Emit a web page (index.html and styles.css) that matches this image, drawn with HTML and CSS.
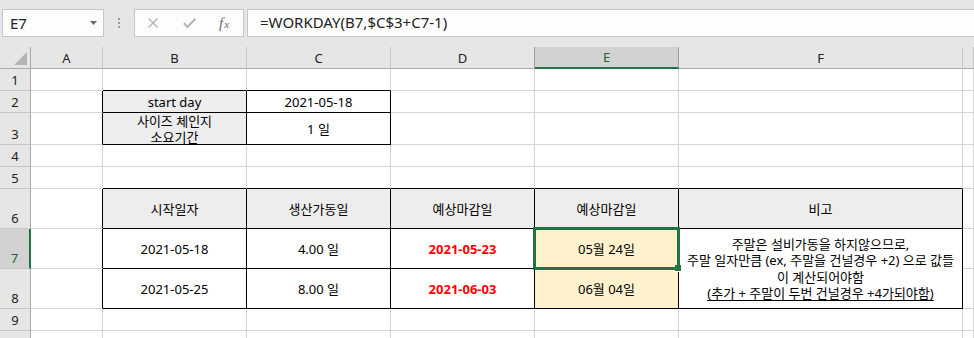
FILE: index.html
```html
<!DOCTYPE html>
<html lang="ko">
<head>
<meta charset="utf-8">
<title>Sheet</title>
<link rel="stylesheet" href="styles.css">
</head>
<body>
<div class="toolbar">
  <div class="namebox">
    <span>E7</span>
    <svg class="dd" width="7" height="4" viewBox="0 0 7 4"><polygon points="0,0 7,0 3.5,4" fill="#6a6a6a"/></svg>
  </div>
  <div class="grip">
    <svg width="2" height="10" viewBox="0 0 2 10"><rect x="0" y="0" width="2" height="2" fill="#9a9a9a"/><rect x="0" y="4" width="2" height="2" fill="#9a9a9a"/><rect x="0" y="8" width="2" height="2" fill="#9a9a9a"/></svg>
  </div>
  <div class="fbtns">
    <svg class="ic-x" width="10" height="10" viewBox="0 0 10 10"><path d="M0.5 0.5 L9.5 9.5 M9.5 0.5 L0.5 9.5" stroke="#b3b3b3" stroke-width="1.4" fill="none"/></svg>
    <svg class="ic-ok" width="13" height="10" viewBox="0 0 13 10"><path d="M0.8 5.2 L4.6 9 L12.3 0.8" stroke="#b3b3b3" stroke-width="2" fill="none"/></svg>
    <span class="fx"><i>f</i><i class="sx">x</i></span>
  </div>
  <div class="finput">=WORKDAY(B7,$C$3+C7-1)</div>
</div>

<div class="sheet">
  <!-- header row -->
  <div class="c corner"><svg width="13" height="13" viewBox="0 0 13 13"><polygon points="13,0 13,13 0,13" fill="#b4b4b4"/></svg></div>
  <div class="c ch">A</div>
  <div class="c ch">B</div>
  <div class="c ch">C</div>
  <div class="c ch chd">D</div>
  <div class="c ch chsel">E</div>
  <div class="c ch">F</div>
  <div class="c ch"></div>

  <!-- row 1 -->
  <div class="c rh">1</div>
  <div class="c"></div>
  <div class="c kb"></div>
  <div class="c kb"></div>
  <div class="c"></div>
  <div class="c"></div>
  <div class="c"></div>
  <div class="c"></div>

  <!-- row 2 -->
  <div class="c rh">2</div>
  <div class="c kr"></div>
  <div class="c kr kb hd">start day</div>
  <div class="c kr kb">2021-05-18</div>
  <div class="c"></div>
  <div class="c"></div>
  <div class="c"></div>
  <div class="c"></div>

  <!-- row 3 -->
  <div class="c rh">3</div>
  <div class="c kr"></div>
  <div class="c kr kb hd"><span class="txt two">사이즈 체인지<br>소요기간</span></div>
  <div class="c kr kb">1 일</div>
  <div class="c"></div>
  <div class="c"></div>
  <div class="c"></div>
  <div class="c"></div>

  <!-- row 4 -->
  <div class="c rh">4</div>
  <div class="c"></div>
  <div class="c"></div>
  <div class="c"></div>
  <div class="c"></div>
  <div class="c"></div>
  <div class="c"></div>
  <div class="c"></div>

  <!-- row 5 -->
  <div class="c rh">5</div>
  <div class="c"></div>
  <div class="c kb"></div>
  <div class="c kb"></div>
  <div class="c kb"></div>
  <div class="c kb"></div>
  <div class="c kb"></div>
  <div class="c"></div>

  <!-- row 6 -->
  <div class="c rh">6</div>
  <div class="c kr"></div>
  <div class="c kr kb hd">시작일자</div>
  <div class="c kr kb hd">생산가동일</div>
  <div class="c kr kb hd">예상마감일</div>
  <div class="c kr kb hd">예상마감일</div>
  <div class="c kr kb hd">비고</div>
  <div class="c"></div>

  <!-- row 7 -->
  <div class="c rh rhsel">7</div>
  <div class="c kr"></div>
  <div class="c kr kb">2021-05-18</div>
  <div class="c kr kb">4.00 일</div>
  <div class="c kr kb red">2021-05-23</div>
  <div class="c kr kb yl sel">05월 24일<span class="selbox"><span class="handle"></span></span></div>
  <div class="c kr kb note"><span class="txt">주말은 설비가동을 하지않으므로,<br>주말 일자만큼 (ex, 주말을 건널경우 +2) 으로 값들<br>이 계산되어야함<br><u>(추가 + 주말이 두번 건널경우 +4가되야함)</u></span></div>
  <div class="c"></div>

  <!-- row 8 -->
  <div class="c rh">8</div>
  <div class="c kr"></div>
  <div class="c kr kb">2021-05-25</div>
  <div class="c kr kb">8.00 일</div>
  <div class="c kr kb red">2021-06-03</div>
  <div class="c kr kb yl">06월 04일</div>
  <div class="c"></div>

  <!-- row 9 -->
  <div class="c rh">9</div>
  <div class="c"></div>
  <div class="c"></div>
  <div class="c"></div>
  <div class="c"></div>
  <div class="c"></div>
  <div class="c"></div>
  <div class="c"></div>

  <!-- row 10 (cut off by the window) -->
  <div class="c rh"></div>
  <div class="c"></div>
  <div class="c"></div>
  <div class="c"></div>
  <div class="c"></div>
  <div class="c"></div>
  <div class="c"></div>
  <div class="c"></div>
</div>
</body>
</html>
```

FILE: styles.css
```css
* { box-sizing: border-box; }
html, body { margin: 0; padding: 0; }
body {
  width: 974px;
  height: 338px;
  overflow: hidden;
  background: #ffffff;
  font-family: "Noto Sans", "Noto Sans CJK KR", sans-serif;
  color: #000;
}

/* ---------- formula bar ---------- */
.toolbar {
  height: 47px;
  background: #e6e6e6;
  display: flex;
  align-items: flex-start;
  padding: 9px 0 0 2px;
}
.namebox {
  width: 102px;
  height: 28px;
  background: #fdfdfd;
  border: 1px solid #c6c6c6;
  display: flex;
  align-items: center;
  justify-content: space-between;
  padding: 0 6px 0 7px;
  font-size: 15px;
  color: #222;
}
.grip {
  width: 30px;
  height: 28px;
  display: flex;
  justify-content: center;
  align-items: center;
}
.fbtns {
  width: 110px;
  height: 28px;
  background: #fdfdfd;
  border: 1px solid #c6c6c6;
  display: flex;
  align-items: center;
  padding-left: 13px;
}
.ic-x { margin-right: 25px; }
.ic-ok { margin-right: 23px; }
.fx {
  font-family: "Liberation Serif", serif;
  font-size: 15px;
  color: #6b6b6b;
  line-height: 1;
  display: flex;
  align-items: baseline;
}
.fx .sx { font-size: 11px; margin-left: 1px; }
.finput {
  flex: 1;
  height: 28px;
  margin-left: 3px;
  background: #fdfdfd;
  border: 1px solid #c6c6c6;
  border-right: none;
  padding-left: 12px;
  font-size: 15px;
  line-height: 25px;
  color: #222;
}

/* ---------- sheet grid ---------- */
.sheet {
  display: grid;
  grid-template-columns: 31px 72px 144px 144px 144px 144px 284px 1fr;
  grid-template-rows: 22px 22px 22px 32px 22px 22px 40px 40px 40px 22px 22px;
}
.c {
  border-right: 1px solid #d4d4d4;
  border-bottom: 1px solid #d4d4d4;
  display: flex;
  align-items: center;
  justify-content: center;
  font-size: 13px;
  line-height: 16px;
  white-space: nowrap;
  text-align: center;
}
.txt { display: block; text-align: center; }
.corner {
  background: #e6e6e6;
  border-right-color: #ababab;
  border-bottom-color: #ababab;
  justify-content: flex-end;
  align-items: flex-end;
  padding: 0 3px 3px 0;
}
.ch {
  background: #e6e6e6;
  border-right-color: #c6c6c6;
  border-bottom-color: #ababab;
  color: #222;
  font-size: 13px;
}
.chd { border-right-color: #9e9e9e; }
.chsel {
  background: #d2d2d2;
  border-right-color: #9e9e9e;
  border-bottom: 2px solid #217346;
  color: #1f5f3a;
}
.rh {
  background: #e6e6e6;
  border-right-color: #ababab;
  border-bottom-color: #c6c6c6;
  align-items: flex-end;
  padding-bottom: 2px;
  color: #222;
  font-size: 13px;
}
.rhsel {
  background: #d2d2d2;
  border-right: 2px solid #217346;
  color: #1f5f3a;
}

.kr { border-right-color: #000; }
.kb { border-bottom-color: #000; }
.hd { background: #ededed; }
.yl { background: #fff2cc; }
.red { color: #ff0000; font-weight: 700; }
.two { line-height: 16px; }
.note {
  grid-row: span 2;
}
.note .txt { line-height: 16.5px; }
.note u { text-underline-offset: 2px; }

/* selection overlay */
.sel { position: relative; }
.selbox {
  position: absolute;
  top: -2px;
  left: -2px;
  right: -2px;
  bottom: -2px;
  border: 3px solid #217346;
  z-index: 2;
}
.handle {
  position: absolute;
  right: -5px;
  bottom: -5px;
  width: 7px;
  height: 7px;
  background: #217346;
  border: 1px solid #ffffff;
  border-top: none;
  border-left: none;
}
```
